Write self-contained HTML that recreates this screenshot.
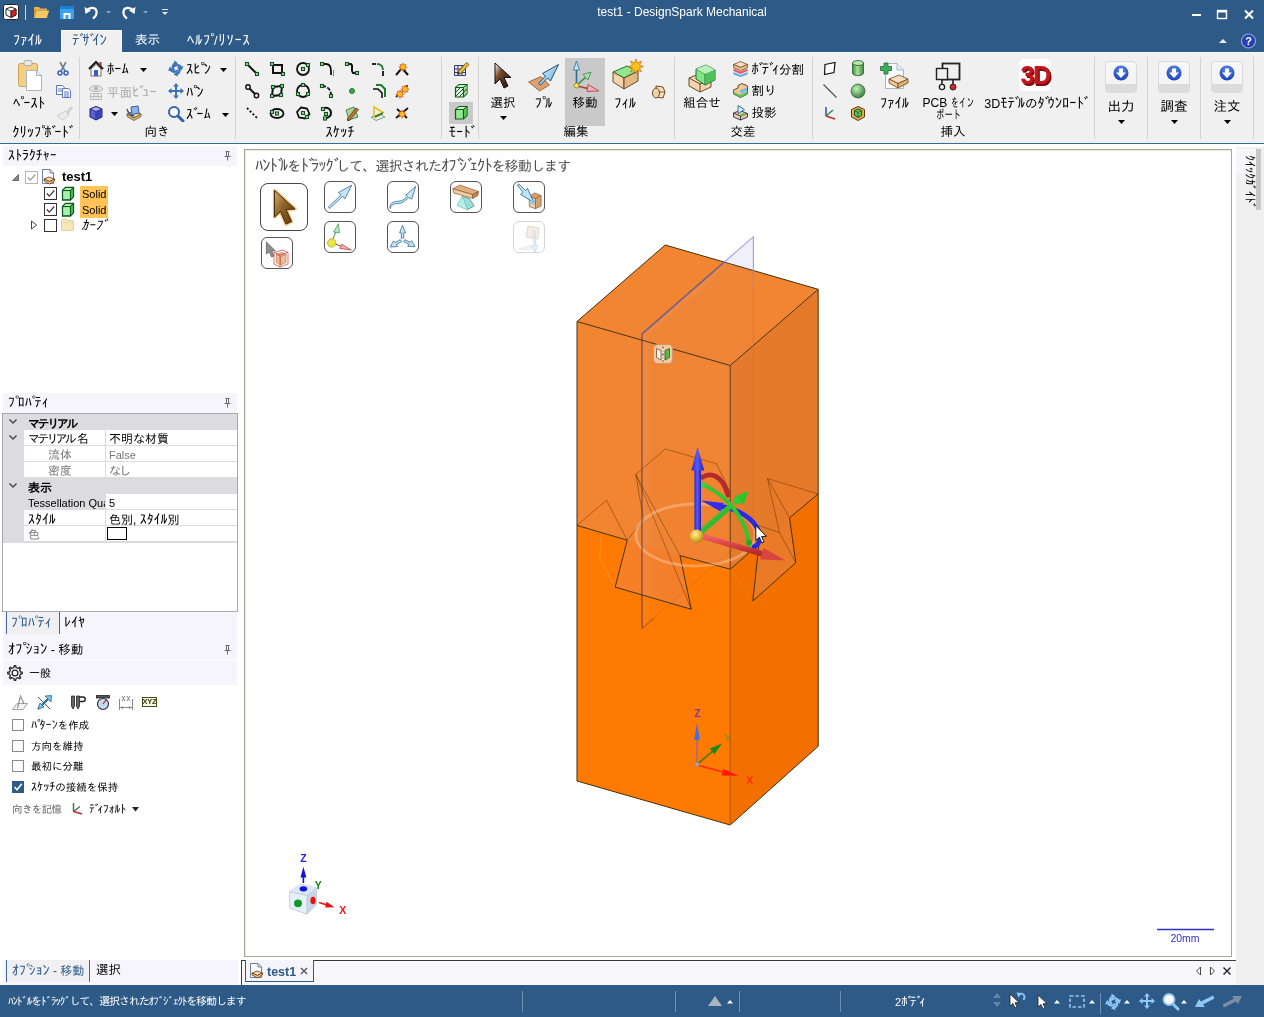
<!DOCTYPE html>
<html lang="ja">
<head>
<meta charset="utf-8">
<title>test1 - DesignSpark Mechanical</title>
<style>
*{box-sizing:border-box;margin:0;padding:0}
html,body{width:1264px;height:1017px;overflow:hidden;background:#fff}
body{position:relative;font-family:"Liberation Sans","IPAGothic","Noto Sans CJK JP",sans-serif;font-size:12px;color:#000;line-height:1}
.a{position:absolute}
.t{position:absolute;white-space:nowrap}
#title{left:0;top:0;width:1264px;height:52px;background:#2d5a87}
#ribbon{left:0;top:52px;width:1264px;height:91px;background:#f0f0f0;border-top:1px solid #f9f9f9;border-bottom:1px solid #e6f0f8}
#ribline{left:0;top:143px;width:1264px;height:1px;background:#3c6a97}
#under{left:0;top:144px;width:1264px;height:841px;background:#fff}
.sep{position:absolute;top:57px;width:1px;height:82px;background:#d4d4d4}
.gl{position:absolute;top:125px;font-size:12px;white-space:nowrap;transform:translateX(-50%)}
#status{left:0;top:985px;width:1264px;height:32px;background:#2d5a87}
</style>
</head>
<body>
<div id="app" style="position:absolute;left:0;top:0;width:1264px;height:1017px;will-change:transform">
<div id="title" class="a"></div>
<div id="ribbon" class="a"></div>
<div id="ribline" class="a"></div>
<div id="under" class="a"></div>
<div id="status" class="a"></div>
<!--TITLE-->
<!-- ===== title bar ===== -->
<svg class="a" style="left:0;top:0" width="200" height="28" viewBox="0 0 200 28">
  <!-- app icon -->
  <rect x="3.5" y="4.5" width="15" height="15" rx="2" fill="#fff" stroke="#222" stroke-width="1"/>
  <path d="M6 9 L11 7 L16 9 L16 15 L11 17.5 L6 15Z" fill="#fff" stroke="#222" stroke-width="1"/>
  <path d="M11 11 L16 9 L16 15 L11 17.5Z" fill="#d8232a" stroke="#222" stroke-width=".8"/>
  <path d="M6 9 L11 11 L11 17.5" fill="none" stroke="#222" stroke-width=".8"/>
  <rect x="25" y="5" width="1" height="15" fill="#c9d3df"/>
  <!-- folder -->
  <path d="M34 7 h5 l1.5 1.5 h6.5 v2 h-13z" fill="#e8b04a"/>
  <path d="M34 18 l2.2-7.5 h13 l-2.4 7.5z" fill="#f6c667"/>
  <path d="M34 18 v-9 l2.2 1.5z" fill="#d99a32"/>
  <!-- save -->
  <rect x="60" y="6" width="14" height="13" fill="#3aa0f0"/>
  <rect x="60" y="6" width="14" height="3" fill="#1b7fd6"/>
  <rect x="63.500" y="13" width="7" height="6" fill="#fff"/>
  <rect x="65.500" y="15" width="3" height="4" fill="#3aa0f0"/>
  <!-- undo -->
  <path d="M87 10.500 c3-4 9-3.500 9.500 1 c.5 3-1.500 5.500-3.500 7" fill="none" stroke="#fff" stroke-width="2.200"/>
  <path d="M84.500 7 l1 7 l5.500-3.500z" fill="#fff"/>
  <path d="M106 11 h5 l-2.500 2.500z" fill="#8fa6be"/>
  <!-- redo -->
  <path d="M133 10.500 c-3-4-9-3.500-9.500 1 c-.5 3 1.500 5.500 3.500 7" fill="none" stroke="#fff" stroke-width="2.200"/>
  <path d="M135.500 7 l-1 7 l-5.500-3.500z" fill="#fff"/>
  <path d="M143 11 h5 l-2.500 2.500z" fill="#8fa6be"/>
  <!-- customize -->
  <rect x="162" y="9" width="6" height="1" fill="#dfe6ee"/>
  <path d="M162 12 h6 l-3 3z" fill="#dfe6ee"/>
</svg>
<div class="t" style="left:50px;width:1264px;top:6px;text-align:center;color:#fff;font-size:12px">test1 - DesignSpark Mechanical</div>
<svg class="a" style="left:1180px;top:0" width="84" height="53" viewBox="0 0 84 53">
  <rect x="12" y="14" width="9" height="2" fill="#fff"/>
  <rect x="37.500" y="10.500" width="9" height="8" fill="none" stroke="#fff" stroke-width="1.400"/>
  <rect x="37" y="10" width="10" height="2.500" fill="#fff"/>
  <path d="M65 10.500 l8 8 M73 10.500 l-8 8" stroke="#fff" stroke-width="2"/>
  <path d="M39 43 l4-4 l4 4z" fill="#e8eef5"/>
  <circle cx="68.500" cy="41" r="7" fill="#2440b4" stroke="#8fa4de" stroke-width="1.200"/>
  <text x="68.500" y="45.200" font-size="11" font-weight="bold" fill="#fff" text-anchor="middle" font-family="Liberation Sans, sans-serif">?</text>
</svg>
<!-- tabs -->
<div class="a" style="left:61px;top:30px;width:61px;height:23px;background:#f0f0f0;border:1px solid #fafafa;border-bottom:none"></div>
<div class="t" style="left:13px;top:32px;height:16px;line-height:16px;color:#fff;font-size:12.500px"><span style="font-size:1.16em">ﾌｧｲﾙ</span></div>
<div class="t" style="left:72px;top:32px;height:16px;line-height:16px;color:#2d5a87;font-size:12.500px"><span style="font-size:1.16em">ﾃ<span style="margin-right:-0.3em">ﾞ</span>ｻ<span style="margin-right:-0.3em">ﾞ</span>ｲﾝ</span></div>
<div class="t" style="left:135px;top:32px;height:16px;line-height:16px;color:#fff;font-size:12.500px">表示</div>
<div class="t" style="left:187px;top:32px;height:16px;line-height:16px;color:#fff;font-size:12.500px;letter-spacing:.8px"><span style="font-size:1.16em">ﾍﾙﾌ<span style="margin-right:-0.3em">ﾟ</span></span>/<span style="font-size:1.16em">ﾘｿｰｽ</span></div>

<!--TITLE_END-->
<!--RIBBON-->
<div class="sep" style="left:79px"></div>
<div class="sep" style="left:235px"></div>
<div class="sep" style="left:441px"></div>
<div class="sep" style="left:478px"></div>
<div class="sep" style="left:674px"></div>
<div class="sep" style="left:812px"></div>
<div class="sep" style="left:1094px"></div>
<div class="sep" style="left:1147px"></div>
<div class="sep" style="left:1200px"></div>
<div class="sep" style="left:1253px"></div>
<svg class="a" style="left:16px;top:58px" width="28" height="34" viewBox="0 0 28 34">
<rect x="2.500" y="5.500" width="19" height="23" rx="2" fill="#f3cf86" stroke="#c9a257"/>
<rect x="8" y="2.500" width="8" height="5" rx="1.500" fill="#e9e9e9" stroke="#aaa"/>
<path d="M10.500 12.500h10l5 5v15h-15z" fill="#fff" stroke="#a9b4c4"/>
<path d="M20.500 12.500v5h5" fill="#e4ebf5" stroke="#a9b4c4"/></svg>
<div class="t" style="left:-31px;width:120px;text-align:center;top:95px;height:16px;line-height:16px;font-size:12.5px;color:#000"><span style="font-size:1.16em">ﾍ<span style="margin-right:-0.3em">ﾟ</span>ｰｽﾄ</span></div>
<svg class="a" style="left:56px;top:61px" width="14" height="15" viewBox="0 0 14 15"><path d="M4 1 L9 10 M10 1 L5 10" stroke="#6c7f9c" stroke-width="1.600" fill="none"/>
<circle cx="4" cy="12" r="2" fill="none" stroke="#3a5fc0" stroke-width="1.500"/><circle cx="10" cy="12" r="2" fill="none" stroke="#3a5fc0" stroke-width="1.500"/></svg>
<svg class="a" style="left:55px;top:84px" width="18" height="14" viewBox="0 0 18 14"><path d="M1.500 1.500h6l2 2v7h-8z" fill="#fff" stroke="#5a78b8"/><path d="M3 5h4M3 7h4" stroke="#5a78b8"/>
<path d="M7.500 4.500h6l2 2v7h-8z" fill="#fff" stroke="#5a78b8"/><path d="M9 8h5M9 10h5M9 12h5" stroke="#5a78b8"/></svg>
<svg class="a" style="left:55px;top:105px" width="19" height="16" viewBox="0 0 19 16"><path d="M11 7 L16 1.500 L17.500 3 L13 9z" fill="#d6d6d6" stroke="#bdbdbd" stroke-width=".6"/>
<path d="M2 11 L10 6 L14 10 L7 15z" fill="#ececec" stroke="#c4c4c4" stroke-width=".8"/></svg>
<div class="t" style="left:-18px;width:120px;text-align:center;top:124px;height:16px;line-height:16px;font-size:12.5px;color:#000"><span style="font-size:1.16em">ｸﾘｯﾌ<span style="margin-right:-0.3em">ﾟ</span>ﾎ<span style="margin-right:-0.3em">ﾞ</span>ｰﾄ<span style="margin-right:-0.3em">ﾞ</span></span></div>
<svg class="a" style="left:88px;top:60px" width="16" height="17" viewBox="0 0 16 17"><path d="M1 9 L8 2 L15 9" fill="none" stroke="#1a1a1a" stroke-width="2"/>
<path d="M3 9 L8 4.500 L13 9 V16 H3z" fill="#fff" stroke="#444" stroke-width=".8"/>
<rect x="6" y="10" width="4" height="6" fill="#3e58c8"/><rect x="11.500" y="2" width="2" height="4" fill="#a03020"/></svg>
<div class="t" style="left:107px;top:61px;height:16px;line-height:16px;font-size:12.5px;color:#000;"><span style="font-size:1.16em">ﾎｰﾑ</span></div>
<svg class="a" style="left:140px;top:67.5px" width="7" height="4" viewBox="0 0 7 4"><path d="M0 0h7L3.500 4z" fill="#000"/></svg>
<svg class="a" style="left:88px;top:83px" width="16" height="17" viewBox="0 0 16 17"><path d="M1 6 C4 1.500 12 1.500 15 6 C12 9.500 4 9.500 1 6z" fill="#e6e6e6" stroke="#b4b4b4"/><circle cx="8" cy="5.500" r="2" fill="#b4b4b4"/>
<path d="M2.500 10.500h11v6h-11zM6 10.500v6M10 10.500v6M2.500 13.500h11" fill="none" stroke="#b9b9b9"/></svg>
<div class="t" style="left:107px;top:83.5px;height:16px;line-height:16px;font-size:12.5px;color:#a9a9a9;">平面<span style="font-size:1.16em">ﾋ<span style="margin-right:-0.3em">ﾞ</span>ｭｰ</span></div>
<svg class="a" style="left:89px;top:105px" width="14" height="16" viewBox="0 0 14 16"><path d="M1 4 L7 1.500 L13 4 V12 L7 15 L1 12z" fill="#5b63d6" stroke="#1d2168" stroke-width="1"/>
<path d="M1 4 L7 6.500 L13 4 L7 1.500z" fill="#aab0f2" stroke="#1d2168" stroke-width=".8"/><path d="M7 6.500V15" stroke="#1d2168" stroke-width=".8"/><path d="M7 6.500 L13 4 V12 L7 15z" fill="#3b42b4"/></svg>
<svg class="a" style="left:111px;top:112.0px" width="7" height="4" viewBox="0 0 7 4"><path d="M0 0h7L3.500 4z" fill="#000"/></svg>
<svg class="a" style="left:125px;top:105px" width="18" height="16" viewBox="0 0 18 16"><path d="M2 9 L9 6 L16 9 L9 13z" fill="#f2d3a8" stroke="#6b4a22" stroke-width=".8"/><path d="M2 9v2.500l7 4 7-4V9l-7 4z" fill="#e0b983" stroke="#6b4a22" stroke-width=".8"/>
<path d="M6 2 L13 1 L14 8 L7 9.500z" fill="#8fb4ea" stroke="#2b4f9a" stroke-width=".9"/><path d="M2 4 C3 8 5 10 9 11" fill="none" stroke="#2b4f9a" stroke-width="1.300"/></svg>
<svg class="a" style="left:167px;top:60px" width="18" height="17" viewBox="0 0 18 17"><g fill="none" stroke="#3c72b4" stroke-width="2.100" stroke-linecap="round"><path d="M8.500 3 C5 4.500 5 8 7 10"/><path d="M14 7.500 C12.500 4.500 9.500 4.500 7 6.500" /><path d="M9.500 14 C13 13 13.500 9.500 11.500 7.500"/><path d="M3.500 9.500 C5 12.500 8 12.500 10.500 10.500"/></g>
<path d="M7 0.500 L11 3 L7.500 5.500z M16.500 6 L14.500 10.500 L11.500 7z M11 16.500 L6.500 14.500 L10 11.500z M1 11 L3 6.500 L6 10z" fill="#3c72b4"/></svg>
<div class="t" style="left:186px;top:61px;height:16px;line-height:16px;font-size:12.5px;color:#000;"><span style="font-size:1.16em">ｽﾋ<span style="margin-right:-0.3em">ﾟ</span>ﾝ</span></div>
<svg class="a" style="left:219.5px;top:67.5px" width="7" height="4" viewBox="0 0 7 4"><path d="M0 0h7L3.500 4z" fill="#000"/></svg>
<svg class="a" style="left:167px;top:82px" width="18" height="18" viewBox="0 0 18 18"><path d="M9 1 L12 4.500 H10 V8 H13.500 V6 L17 9 L13.500 12 V10 H10 V13.500 H12 L9 17 L6 13.500 H8 V10 H4.500 V12 L1 9 L4.500 6 V8 H8 V4.500 H6z" fill="#3c72b4"/></svg>
<div class="t" style="left:186px;top:83.5px;height:16px;line-height:16px;font-size:12.5px;color:#000;"><span style="font-size:1.16em">ﾊ<span style="margin-right:-0.3em">ﾟ</span>ﾝ</span></div>
<svg class="a" style="left:167px;top:105px" width="18" height="17" viewBox="0 0 18 17"><circle cx="7" cy="7" r="5" fill="#fff" stroke="#2f63a8" stroke-width="2"/><path d="M11 11 L16 16" stroke="#2f63a8" stroke-width="3" stroke-linecap="round"/></svg>
<div class="t" style="left:186px;top:106px;height:16px;line-height:16px;font-size:12.5px;color:#000;"><span style="font-size:1.16em">ｽ<span style="margin-right:-0.3em">ﾞ</span>ｰﾑ</span></div>
<svg class="a" style="left:222px;top:112.5px" width="7" height="4" viewBox="0 0 7 4"><path d="M0 0h7L3.500 4z" fill="#000"/></svg>
<div class="t" style="left:97px;width:120px;text-align:center;top:124px;height:16px;line-height:16px;font-size:12.5px;color:#000">向き</div>
<svg class="a" style="left:244px;top:61px" width="16" height="16" viewBox="0 0 16 16"><path d="M3 3 L13 13" stroke="#111" stroke-width="2"/><rect x="1.5" y="1.5" width="3" height="3" fill="#9fd8a0" stroke="#14501e" stroke-width="1.100"/><rect x="11.5" y="11.5" width="3" height="3" fill="#9fd8a0" stroke="#14501e" stroke-width="1.100"/></svg>
<svg class="a" style="left:269px;top:61px" width="16" height="16" viewBox="0 0 16 16"><rect x="4" y="4" width="9" height="8" fill="none" stroke="#111" stroke-width="2"/><rect x="1.5" y="1.5" width="3" height="3" fill="#9fd8a0" stroke="#14501e" stroke-width="1.100"/><rect x="12.5" y="11.5" width="3" height="3" fill="#9fd8a0" stroke="#14501e" stroke-width="1.100"/></svg>
<svg class="a" style="left:294.5px;top:61px" width="16" height="16" viewBox="0 0 16 16"><circle cx="8" cy="8" r="6" fill="none" stroke="#111" stroke-width="1.800"/><rect x="6.5" y="6.5" width="3" height="3" fill="#9fd8a0" stroke="#14501e" stroke-width="1.100"/><rect x="11.5" y="2.5" width="3" height="3" fill="#9fd8a0" stroke="#14501e" stroke-width="1.100"/></svg>
<svg class="a" style="left:319px;top:61px" width="16" height="16" viewBox="0 0 16 16"><path d="M3 3 H7 C11 3 12 6 12 10 V14" fill="none" stroke="#111" stroke-width="1.800"/><path d="M14.500 9v6" stroke="#888"/><rect x="1.5" y="1.5" width="3" height="3" fill="#9fd8a0" stroke="#14501e" stroke-width="1.100"/></svg>
<svg class="a" style="left:344px;top:61px" width="16" height="16" viewBox="0 0 16 16"><path d="M3 3 H7 C10 5 6 9 9 12 H13" fill="none" stroke="#111" stroke-width="2"/><rect x="1.5" y="1.5" width="3" height="3" fill="#9fd8a0" stroke="#14501e" stroke-width="1.100"/><rect x="11.5" y="10.5" width="3" height="3" fill="#9fd8a0" stroke="#14501e" stroke-width="1.100"/></svg>
<svg class="a" style="left:370px;top:61px" width="16" height="16" viewBox="0 0 16 16"><path d="M2 3 H6" stroke="#111" stroke-width="1.800"/><path d="M7 3 C11 3 13 6 13 9" fill="none" stroke="#1f7a2e" stroke-width="2"/><path d="M13 10 V15" stroke="#111" stroke-width="1.800"/></svg>
<svg class="a" style="left:394px;top:61px" width="16" height="16" viewBox="0 0 16 16"><path d="M2 14 L8 7 L14 14" fill="none" stroke="#111" stroke-width="2"/><path d="M9 1 l1.200 2.800 2.800-1.200-1.200 2.800 2.800 1.200-2.800 1.200 1.200 2.800-2.800-1.200-1.200 2.800-1.200-2.800-2.800 1.200 1.200-2.800-2.800-1.200 2.800-1.200-1.200-2.800 2.800 1.200z" fill="#f4c21a" stroke="#d6301a" stroke-width=".7" transform="scale(.75) translate(3.0 1.6666666666666667)"/></svg>
<svg class="a" style="left:244px;top:83px" width="16" height="16" viewBox="0 0 16 16"><path d="M4 4 L12 12" stroke="#111" stroke-width="2"/><circle cx="4" cy="4" r="2.200" fill="#f0f0f0" stroke="#111" stroke-width="1.400"/><circle cx="12.500" cy="12.500" r="2.200" fill="#f0f0f0" stroke="#111" stroke-width="1.400"/></svg>
<svg class="a" style="left:269px;top:83px" width="16" height="16" viewBox="0 0 16 16"><path d="M4 4 L13 3 L12 12 L3 13z" fill="none" stroke="#111" stroke-width="2"/><rect x="2.5" y="2.5" width="3" height="3" fill="#9fd8a0" stroke="#14501e" stroke-width="1.100"/><rect x="11.5" y="1.5" width="3" height="3" fill="#9fd8a0" stroke="#14501e" stroke-width="1.100"/><rect x="10.5" y="10.5" width="3" height="3" fill="#9fd8a0" stroke="#14501e" stroke-width="1.100"/><rect x="1.5" y="11.5" width="3" height="3" fill="#9fd8a0" stroke="#14501e" stroke-width="1.100"/></svg>
<svg class="a" style="left:294.5px;top:83px" width="16" height="16" viewBox="0 0 16 16"><circle cx="8" cy="8" r="6" fill="none" stroke="#111" stroke-width="1.800"/><rect x="6.5" y="0.5" width="3" height="3" fill="#9fd8a0" stroke="#14501e" stroke-width="1.100"/><rect x="1.5" y="9.5" width="3" height="3" fill="#9fd8a0" stroke="#14501e" stroke-width="1.100"/><rect x="11.5" y="9.5" width="3" height="3" fill="#9fd8a0" stroke="#14501e" stroke-width="1.100"/></svg>
<svg class="a" style="left:319px;top:83px" width="16" height="16" viewBox="0 0 16 16"><path d="M3 3 C8 3 12 6 12 12" fill="none" stroke="#111" stroke-width="1.800" stroke-dasharray="4 1.500"/><rect x="1.5" y="1.5" width="3" height="3" fill="#9fd8a0" stroke="#14501e" stroke-width="1.100"/><rect x="10.5" y="11.5" width="3" height="3" fill="#9fd8a0" stroke="#14501e" stroke-width="1.100"/></svg>
<svg class="a" style="left:344px;top:83px" width="16" height="16" viewBox="0 0 16 16"><circle cx="8" cy="8" r="2.500" fill="#3aa64a" stroke="#1f7a2e"/></svg>
<svg class="a" style="left:370px;top:83px" width="16" height="16" viewBox="0 0 16 16"><path d="M3 6 H8 L12 10 V15" fill="none" stroke="#111" stroke-width="1.600"/><path d="M6 2 H11 L15 6 V14" fill="none" stroke="#1f7a2e" stroke-width="2"/></svg>
<svg class="a" style="left:394px;top:83px" width="16" height="16" viewBox="0 0 16 16"><path d="M2 14 L14 2" stroke="#111" stroke-width="1.500" stroke-dasharray="3 1.500"/><path d="M6 6 l1.200 2.800 2.800-1.200-1.200 2.800 2.800 1.200-2.800 1.200 1.200 2.800-2.800-1.200-1.200 2.800-1.200-2.800-2.800 1.200 1.200-2.800-2.800-1.200 2.800-1.200-1.200-2.800 2.800 1.200z" fill="#f4c21a" stroke="#d6301a" stroke-width=".7" transform="scale(.75) translate(2.0 3.3333333333333335)"/><path d="M11 1 l1.200 2.800 2.800-1.200-1.200 2.800 2.800 1.200-2.800 1.200 1.200 2.800-2.800-1.200-1.200 2.800-1.200-2.800-2.800 1.200 1.200-2.800-2.800-1.200 2.800-1.200-1.200-2.800 2.800 1.200z" fill="#f4c21a" stroke="#d6301a" stroke-width=".7" transform="scale(.75) translate(3.6666666666666665 1.6666666666666667)"/></svg>
<svg class="a" style="left:244px;top:105px" width="16" height="16" viewBox="0 0 16 16"><path d="M3 3 L13 13" stroke="#111" stroke-width="1.800" stroke-dasharray="2 2"/></svg>
<svg class="a" style="left:269px;top:105px" width="16" height="16" viewBox="0 0 16 16"><ellipse cx="8" cy="8.500" rx="6.500" ry="4.500" fill="none" stroke="#111" stroke-width="1.800"/><rect x="6.5" y="7.0" width="3" height="3" fill="#9fd8a0" stroke="#14501e" stroke-width="1.100"/><rect x="1.5" y="5.5" width="3" height="3" fill="#9fd8a0" stroke="#14501e" stroke-width="1.100"/></svg>
<svg class="a" style="left:294.5px;top:105px" width="16" height="16" viewBox="0 0 16 16"><path d="M6 2.500 L12 3.500 L14.500 9 L10 13.500 L4 12.500 L2 7z" fill="none" stroke="#111" stroke-width="1.800"/><rect x="6.5" y="6.5" width="3" height="3" fill="#9fd8a0" stroke="#14501e" stroke-width="1.100"/><rect x="10.5" y="10.5" width="3" height="3" fill="#9fd8a0" stroke="#14501e" stroke-width="1.100"/></svg>
<svg class="a" style="left:319px;top:105px" width="16" height="16" viewBox="0 0 16 16"><path d="M5 3 C12 1 15 10 8 13" fill="none" stroke="#111" stroke-width="2"/><rect x="2.5" y="2.5" width="3" height="3" fill="#9fd8a0" stroke="#14501e" stroke-width="1.100"/><rect x="5.5" y="7.5" width="3" height="3" fill="#9fd8a0" stroke="#14501e" stroke-width="1.100"/><rect x="4.5" y="12.0" width="3" height="3" fill="#9fd8a0" stroke="#14501e" stroke-width="1.100"/></svg>
<svg class="a" style="left:344px;top:105px" width="16" height="16" viewBox="0 0 16 16"><path d="M2 5 L10 2 L14 12 L5 15z" fill="#a6d49a" stroke="#3f6a3a" stroke-width=".8"/><path d="M3 14 L12 3 L14.500 4.500 L5.500 15.500z" fill="#b8742e" stroke="#5a2f0c" stroke-width=".7"/><path d="M3 14 l.5 2.200 2-.700z" fill="#222"/></svg>
<svg class="a" style="left:370px;top:105px" width="16" height="16" viewBox="0 0 16 16"><path d="M1 12 L10 9 L15 12 L6 15.500z" fill="#e8f3e2" stroke="#6b8a5e" stroke-width=".8"/><path d="M4 2 L13 7.500 L4 12z" fill="none" stroke="#e0c020" stroke-width="1.600"/><path d="M5 12 L13 8" stroke="#1f7a2e" stroke-width="1.600"/></svg>
<svg class="a" style="left:394px;top:105px" width="16" height="16" viewBox="0 0 16 16"><path d="M2 13 L14 3 M3 4 L13 13" stroke="#111" stroke-width="1.700"/><path d="M8 4 l1.200 2.800 2.800-1.200-1.200 2.800 2.800 1.200-2.800 1.200 1.200 2.800-2.800-1.200-1.200 2.800-1.200-2.800-2.800 1.200 1.200-2.800-2.800-1.200 2.800-1.200-1.200-2.800 2.800 1.200z" fill="#f4c21a" stroke="#d6301a" stroke-width=".7" transform="scale(.75) translate(2.6666666666666665 2.6666666666666665)"/></svg>
<div class="t" style="left:280px;width:120px;text-align:center;top:124px;height:16px;line-height:16px;font-size:12.5px;color:#000"><span style="font-size:1.16em">ｽｹｯﾁ</span></div>
<div class="a" style="left:449px;top:102px;width:24px;height:22px;background:#c9c9c9"></div>
<svg class="a" style="left:453px;top:61px" width="17" height="16" viewBox="0 0 17 16"><path d="M1.500 4.500h11v10h-11zM1.500 8h11M1.500 11.500h11M5 4.500v10M9 4.500v10" fill="#e8e8f4" stroke="#2a2a66" stroke-width=".9"/><path d="M5 11 L13.500 1.500 L16 3.500 L7.500 13z" fill="#e8c030" stroke="#5a3a0c" stroke-width=".7"/><path d="M5 11 l-.6 2.600 3.100-.6z" fill="#222"/></svg>
<svg class="a" style="left:454px;top:83px" width="15" height="16" viewBox="0 0 15 16"><path d="M1.500 4.500 L5 1.500 H13 V10.500 L9.500 14 H1.500z" fill="#dff5df" stroke="#0e5a1a" stroke-width="1.200"/><path d="M1.500 4.500 H9.500 L13 1.500 M9.500 4.500 V14" fill="none" stroke="#0e5a1a" stroke-width="1.200"/><path d="M10 4.700 L12.500 2.500 V10.200 L10 13z" fill="#9fd89f"/><path d="M2.500 4 L5.200 2 H11.700 L9.300 4z" fill="#c6f0c6"/><path d="M2 9 L6 5 M2 13 L9 6 M5 14 L9 10 M10 9 L12.500 6" stroke="#0e5a1a" stroke-width="1"/></svg>
<svg class="a" style="left:454px;top:105px" width="15" height="16" viewBox="0 0 15 16"><path d="M1.500 4.500 L5 1.500 H13 V10.500 L9.500 14 H1.500z" fill="#8ee88e" stroke="#0e5a1a" stroke-width="1.200"/><path d="M1.500 4.500 H9.500 L13 1.500 M9.500 4.500 V14" fill="none" stroke="#0e5a1a" stroke-width="1.200"/><path d="M10 4.700 L12.500 2.500 V10.200 L10 13z" fill="#58c458"/><path d="M2.500 4 L5.200 2 H11.700 L9.300 4z" fill="#c6f6c6"/></svg>
<div class="t" style="left:401px;width:120px;text-align:center;top:124px;height:16px;line-height:16px;font-size:12.5px;color:#000"><span style="font-size:1.16em">ﾓｰﾄ<span style="margin-right:-0.3em">ﾞ</span></span></div>
<svg class="a" style="left:490px;top:60px" width="26" height="32" viewBox="0 0 26 32"><defs><linearGradient id="gsel" x1="0" y1="0" x2="1" y2="1"><stop offset="0" stop-color="#fff"/><stop offset=".35" stop-color="#7a4a2a"/><stop offset="1" stop-color="#1a0c04"/></linearGradient></defs>
<path d="M5 3 L5 24 L10 19 L14 28 L18 26 L14 17.500 L21 17.500z" fill="url(#gsel)" stroke="#111" stroke-width="1"/></svg>
<div class="t" style="left:443px;width:120px;text-align:center;top:95px;height:16px;line-height:16px;font-size:12.5px;color:#000">選択</div>
<svg class="a" style="left:500px;top:116.0px" width="7" height="4" viewBox="0 0 7 4"><path d="M0 0h7L3.500 4z" fill="#000"/></svg>
<svg class="a" style="left:528px;top:60px" width="32" height="32" viewBox="0 0 32 32"><defs><linearGradient id="gpl" x1="0" y1="0" x2="1" y2="1"><stop offset="0" stop-color="#e8f6fc"/><stop offset="1" stop-color="#58a8d8"/></linearGradient></defs>
<path d="M.5 22 L13 16.500 L21.500 25 L11.500 31z" fill="#dca070" stroke="#8a5a2e" stroke-width=".8"/>
<path d="M10.500 23.500 L17.500 16 L14.500 13.500 L30.500 4.500 L22.500 21 L19.500 18 L12.500 25z" fill="url(#gpl)" stroke="#1e4f76" stroke-width="1" stroke-linejoin="round"/></svg>
<div class="t" style="left:483.5px;width:120px;text-align:center;top:95px;height:16px;line-height:16px;font-size:12.5px;color:#000"><span style="font-size:1.16em">ﾌ<span style="margin-right:-0.3em">ﾟ</span>ﾙ</span></div>
<div class="a" style="left:565px;top:58px;width:40px;height:68px;background:#c9c9c9"></div>
<svg class="a" style="left:570px;top:60px" width="30" height="32" viewBox="0 0 30 32"><path d="M5 6 L8 6 L6.500 1z" fill="#9fd0ee"/><path d="M6.500 25 V8" stroke="#2e6f96" stroke-width="1.600"/><path d="M3.500 10 L6.500 1 L9.500 10z" fill="#bfe4f6" stroke="#2e6f96" stroke-width=".8"/>
<path d="M7 25 L16 17" stroke="#3a8a4a" stroke-width="1.600"/><path d="M13 14.500 L21 12 L18 20z" fill="#a6e0b0" stroke="#3a8a4a" stroke-width=".8"/>
<path d="M7 26 L20 29" stroke="#b03a3a" stroke-width="1.600"/><path d="M18 24.500 L29 31 L17 31.500z" fill="#f2b0b0" stroke="#b03a3a" stroke-width=".8"/>
<circle cx="6.500" cy="25.500" r="2.500" fill="#f2e25a" stroke="#8a7a1a" stroke-width=".8"/></svg>
<div class="t" style="left:525px;width:120px;text-align:center;top:95px;height:16px;line-height:16px;font-size:12.5px;color:#000">移動</div>
<svg class="a" style="left:610px;top:58px" width="34" height="34" viewBox="0 0 34 34"><path d="M3 14 L17 8 L28 13 L14 20z" fill="#8ee88e" stroke="#1f5a2a" stroke-width=".9"/>
<path d="M3 14 V24 L14 31 V20z" fill="#f4d4ac" stroke="#5a3a1a" stroke-width=".9"/><path d="M14 20 L28 13 V23 L14 31z" fill="#e2b884" stroke="#5a3a1a" stroke-width=".9"/>
<path d="M26 1 l1.500 4 4-2-2 4 4 1.500-4 1.500 2 4-4-2-1.500 4-1.500-4-4 2 2-4-4-1.500 4-1.500-2-4 4 2z" fill="#f6c21a" stroke="#e0701a" stroke-width=".8"/></svg>
<div class="t" style="left:565px;width:120px;text-align:center;top:95px;height:16px;line-height:16px;font-size:12.5px;color:#000"><span style="font-size:1.16em">ﾌｨﾙ</span></div>
<svg class="a" style="left:651px;top:84px" width="16" height="17" viewBox="0 0 16 17"><path d="M5 2 L12 3 L14 8 L12 14 L5 13z" fill="#f6dcc0" stroke="#6b4a22" stroke-width="1"/><ellipse cx="5" cy="9" rx="3.500" ry="5" fill="#f2cfa6" stroke="#6b4a22" stroke-width="1"/><path d="M8 8 L14 8" stroke="#6b4a22" stroke-width=".8"/></svg>
<div class="t" style="left:516px;width:120px;text-align:center;top:124px;height:16px;line-height:16px;font-size:12.5px;color:#000">編集</div>
<svg class="a" style="left:687px;top:61px" width="30" height="32" viewBox="0 0 30 32"><path d="M2 17 L12 13 L24 19 V26 L13 31 L2 25z" fill="#f4d4ac" stroke="#5a3a1a" stroke-width=".9"/><path d="M2 17 L13 23 L24 19 M13 23 V31" fill="none" stroke="#5a3a1a" stroke-width=".9"/>
<path d="M9 8 L19 4 L28 9 V19 L18 24 L9 18z" fill="#7fe68a" stroke="#1f5a2a" stroke-width=".9"/><path d="M9 8 L18 13 L28 9 M18 13 V24" fill="none" stroke="#1f5a2a" stroke-width=".9"/><path d="M9 8 L19 4 L28 9 L18 13z" fill="#b4f4ba"/><path d="M18.500 13.500 L27.500 9.700 V18.700 L18.500 23.300z" fill="#4cc45a"/></svg>
<div class="t" style="left:642px;width:120px;text-align:center;top:95px;height:16px;line-height:16px;font-size:12.5px;color:#000">組合せ</div>
<svg class="a" style="left:732px;top:60px" width="17" height="17" viewBox="0 0 17 17"><path d="M1.500 4.500 L8.500 1.500 L15.500 4.500 L8.500 7.500z" fill="#f6dcc0" stroke="#6b4a22" stroke-width=".8"/><path d="M1.500 4.500v3l7 3 7-3v-3l-7 3z" fill="#f0c896" stroke="#6b4a22" stroke-width=".8"/>
<path d="M1.500 8.500v2.500l7 3 7-3V8.500l-7 3z" fill="#e85a6a"/><path d="M1.500 12v2.500l7 2.500 7-2.500V12l-7 3z" fill="#6aa8e8"/></svg>
<div class="t" style="left:751.5px;top:61px;height:16px;line-height:16px;font-size:12.5px;color:#000;"><span style="font-size:1.16em">ﾎ<span style="margin-right:-0.3em">ﾞ</span>ﾃ<span style="margin-right:-0.3em">ﾞ</span>ｨ</span>分割</div>
<svg class="a" style="left:732px;top:82px" width="17" height="17" viewBox="0 0 17 17"><path d="M1.500 8 L6 6 V3.500 L10 1.500 L15.500 4 V12 L8.500 15.500 L1.500 12z" fill="#f0c896" stroke="#5a3a1a" stroke-width=".9"/><path d="M1.500 10 L8.500 13 L15.500 9.500 V12 L8.500 15.500 L1.500 12z" fill="#58c458"/><path d="M8 8.500 L15 5.500 V9 L8.500 12z" fill="#7ab8f0"/></svg>
<div class="t" style="left:751.5px;top:83px;height:16px;line-height:16px;font-size:12.5px;color:#000;">割り</div>
<svg class="a" style="left:732px;top:104px" width="17" height="17" viewBox="0 0 17 17"><path d="M1.500 9 L8 6.500 L15.500 9.500 V13 L8.500 16 L1.500 13z" fill="#f0c896" stroke="#2a2a66" stroke-width=".9"/><path d="M1.500 9 L8.500 12 L15.500 9.500 M8.500 12V16" fill="none" stroke="#2a2a66" stroke-width=".9"/>
<path d="M6 1.500 L12.500 5.500 L6 9.500z" fill="#d8ecfa" stroke="#2e6f96" stroke-width="1"/><path d="M8 10.500 L12 9 L14 11 L10 12.500z" fill="#58c458"/></svg>
<div class="t" style="left:751.5px;top:105px;height:16px;line-height:16px;font-size:12.5px;color:#000;">投影</div>
<div class="t" style="left:683px;width:120px;text-align:center;top:124px;height:16px;line-height:16px;font-size:12.5px;color:#000">交差</div>
<svg class="a" style="left:822px;top:60px" width="16" height="16" viewBox="0 0 16 16"><path d="M3 4.500 L13 2.500 L12 12.500 L2.500 14.500z" fill="#fff" stroke="#111" stroke-width="1.200"/></svg>
<svg class="a" style="left:822px;top:83px" width="16" height="16" viewBox="0 0 16 16"><path d="M1.500 1.500 L14.500 14.500" stroke="#555" stroke-width="1.200"/></svg>
<svg class="a" style="left:822px;top:105px" width="16" height="16" viewBox="0 0 16 16"><path d="M4 2 V11" stroke="#2a5fb8" stroke-width="1.600"/><path d="M4 11 L11 5" stroke="#2a8a3a" stroke-width="1.400"/><path d="M4 11 L13 14" stroke="#c02a2a" stroke-width="1.600"/></svg>
<svg class="a" style="left:850px;top:59px" width="16" height="18" viewBox="0 0 16 18"><defs><linearGradient id="gcy" x1="0" x2="1"><stop offset="0" stop-color="#3f8a3f"/><stop offset=".45" stop-color="#a6e0a0"/><stop offset="1" stop-color="#3f8a3f"/></linearGradient><radialGradient id="gsp" cx=".4" cy=".35" r=".7"><stop offset="0" stop-color="#c6f0c0"/><stop offset="1" stop-color="#2f7a2f"/></radialGradient></defs>
<path d="M2.500 4 V14 C2.500 17.500 13.500 17.500 13.500 14 V4z" fill="url(#gcy)" stroke="#2a5a2a" stroke-width=".8"/><ellipse cx="8" cy="4" rx="5.500" ry="2.500" fill="#b4e8b0" stroke="#2a5a2a" stroke-width=".8"/></svg>
<svg class="a" style="left:850px;top:83px" width="16" height="16" viewBox="0 0 16 16"><circle cx="8" cy="8" r="7" fill="url(#gsp)" stroke="#2a5a2a" stroke-width=".7"/></svg>
<svg class="a" style="left:850px;top:105px" width="16" height="17" viewBox="0 0 16 17"><path d="M1.500 4.500 L8 1.500 L14.500 4.500 V12 L8 15.500 L1.500 12z" fill="#e8a850" stroke="#5a3a0c" stroke-width="1"/><path d="M4.500 5.500 L8 4 L11.500 5.500 V10.500 L8 12.500 L4.500 10.500z" fill="#58c458" stroke="#1f5a2a" stroke-width="1"/><path d="M8 7.500V12.500M4.500 5.500L8 7.500L11.500 5.500" fill="none" stroke="#1f5a2a" stroke-width=".8"/></svg>
<svg class="a" style="left:880px;top:60px" width="30" height="32" viewBox="0 0 30 32"><path d="M5.500 3.500 H17 L23.500 10 V28.500 H5.500z" fill="#fbfcfe" stroke="#a9b4c8"/><path d="M17 3.500 V10 H23.500" fill="#e4eaf4" stroke="#a9b4c8"/>
<path d="M4 3 H8 V6.500 H11.500 V10.500 H8 V14 H4 V10.500 H.5 V6.500 H4z" fill="#3fae5a" stroke="#1f6a32" stroke-width=".8"/>
<path d="M9 19 L19 15 L28 19 L18 23.500z" fill="#f6dcc0" stroke="#6b4a22" stroke-width=".8"/><path d="M9 19 V23 L18 28 V23.500z" fill="#f0c896" stroke="#6b4a22" stroke-width=".8"/><path d="M18 23.500 L28 19 V23 L18 28z" fill="#e0b070" stroke="#6b4a22" stroke-width=".8"/></svg>
<div class="t" style="left:834.5px;width:120px;text-align:center;top:95px;height:16px;line-height:16px;font-size:12.5px;color:#000"><span style="font-size:1.16em">ﾌｧｲﾙ</span></div>
<svg class="a" style="left:934px;top:60px" width="28" height="32" viewBox="0 0 28 32"><rect x="8.500" y="3.500" width="17" height="16" fill="none" stroke="#222" stroke-width="1.800"/><rect x="2.500" y="8.500" width="11" height="11" fill="#f0f0f0" stroke="#222" stroke-width="1.400"/>
<path d="M8 19.500 V25 M19 19.500 V25" stroke="#222" stroke-width="1.600"/><circle cx="8" cy="27" r="2.600" fill="#fff" stroke="#222" stroke-width="1.400"/><circle cx="19" cy="27" r="3" fill="#d8232a" stroke="#222" stroke-width="1"/></svg>
<div class="t" style="left:888px;width:120px;text-align:center;top:95px;height:16px;line-height:16px;font-size:12.5px;color:#000"><span style="font-size:12px">PCB </span><span style="display:inline-block;width:23px;height:12px;vertical-align:baseline;text-align:left"><span style="display:inline-block;transform:scaleX(0.62);transform-origin:0 50%;white-space:nowrap">をイン</span></span></div>
<div class="t" style="left:888px;width:120px;text-align:center;top:107px;height:16px;line-height:16px;font-size:12.5px;color:#000"><span style="display:inline-block;width:25px;height:12px;vertical-align:baseline;text-align:left"><span style="display:inline-block;transform:scaleX(0.67);transform-origin:0 50%;white-space:nowrap">ポート</span></span></div>
<div class="a" style="left:1019px;top:59px;width:32px;height:32px;background:#fff;border-radius:5px"></div>
<div class="t" style="left:1019px;top:61px;width:32px;height:28px;line-height:28px;text-align:center;font-size:25px;font-weight:bold;color:#c8181e;letter-spacing:-1.500px;text-shadow:1px 1px 0 #7a0c10,1.500px 2px 0 #7a0c10">3D</div>
<div class="t" style="left:975.5px;width:120px;text-align:center;top:95px;height:16px;line-height:16px;font-size:12.5px;color:#000">3D<span style="font-size:1.16em">ﾓﾃ<span style="margin-right:-0.3em">ﾞ</span>ﾙ</span>の<span style="font-size:1.16em">ﾀ<span style="margin-right:-0.3em">ﾞ</span>ｳﾝﾛｰﾄ<span style="margin-right:-0.3em">ﾞ</span></span></div>
<div class="t" style="left:893px;width:120px;text-align:center;top:124px;height:16px;line-height:16px;font-size:12.5px;color:#000">挿入</div>
<div class="a" style="left:1105px;top:61px;width:32px;height:32px;border:1px solid #dadada;border-radius:4px;background:linear-gradient(#f7f7f7 0,#f4f4f4 72%,#dcdcdc 73%,#dcdcdc 100%)"></div>
<svg class="a" style="left:1113px;top:65px" width="16" height="16" viewBox="0 0 16 16"><defs><radialGradient id="gb1121" cx=".5" cy=".3" r=".8"><stop offset="0" stop-color="#5a8af0"/><stop offset="1" stop-color="#1436b4"/></radialGradient></defs><circle cx="8" cy="8" r="7.500" fill="url(#gb1121)"/><path d="M6 3.500h4v4h3L8 13 3 7.500h3z" fill="#fff"/></svg>
<div class="t" style="left:1061px;width:120px;text-align:center;top:99px;height:16px;line-height:16px;font-size:13.5px;color:#000">出力</div>
<svg class="a" style="left:1118px;top:120.0px" width="7" height="4" viewBox="0 0 7 4"><path d="M0 0h7L3.500 4z" fill="#000"/></svg>
<div class="a" style="left:1158px;top:61px;width:32px;height:32px;border:1px solid #dadada;border-radius:4px;background:linear-gradient(#f7f7f7 0,#f4f4f4 72%,#dcdcdc 73%,#dcdcdc 100%)"></div>
<svg class="a" style="left:1166px;top:65px" width="16" height="16" viewBox="0 0 16 16"><defs><radialGradient id="gb1174" cx=".5" cy=".3" r=".8"><stop offset="0" stop-color="#5a8af0"/><stop offset="1" stop-color="#1436b4"/></radialGradient></defs><circle cx="8" cy="8" r="7.500" fill="url(#gb1174)"/><path d="M6 3.500h4v4h3L8 13 3 7.500h3z" fill="#fff"/></svg>
<div class="t" style="left:1114px;width:120px;text-align:center;top:99px;height:16px;line-height:16px;font-size:13.5px;color:#000">調査</div>
<svg class="a" style="left:1171px;top:120.0px" width="7" height="4" viewBox="0 0 7 4"><path d="M0 0h7L3.500 4z" fill="#000"/></svg>
<div class="a" style="left:1211px;top:61px;width:32px;height:32px;border:1px solid #dadada;border-radius:4px;background:linear-gradient(#f7f7f7 0,#f4f4f4 72%,#dcdcdc 73%,#dcdcdc 100%)"></div>
<svg class="a" style="left:1219px;top:65px" width="16" height="16" viewBox="0 0 16 16"><defs><radialGradient id="gb1227" cx=".5" cy=".3" r=".8"><stop offset="0" stop-color="#5a8af0"/><stop offset="1" stop-color="#1436b4"/></radialGradient></defs><circle cx="8" cy="8" r="7.500" fill="url(#gb1227)"/><path d="M6 3.500h4v4h3L8 13 3 7.500h3z" fill="#fff"/></svg>
<div class="t" style="left:1167px;width:120px;text-align:center;top:99px;height:16px;line-height:16px;font-size:13.5px;color:#000">注文</div>
<svg class="a" style="left:1224px;top:120.0px" width="7" height="4" viewBox="0 0 7 4"><path d="M0 0h7L3.500 4z" fill="#000"/></svg>
<!--RIBBON_END-->
<!--LEFT-->
<div class="a" style="left:3px;top:147px;width:235px;height:812px;background:#fff;"></div>
<div class="a" style="left:3px;top:146px;width:234px;height:20px;background:#f5f5fb;"></div>
<div class="t" style="left:8px;top:147px;height:16px;line-height:16px;font-size:12px;color:#000;"><span style="font-size:1.16em">ｽﾄﾗｸﾁｬｰ</span></div>
<svg class="a" style="left:223px;top:150px" width="9" height="12" viewBox="0 0 9 12"><path d="M2.500 1.500h4M3.500 1.500v5M5.500 1.500v5M1.500 6.500h6M4.500 6.500v4" fill="none" stroke="#6a6a78" stroke-width="1"/></svg>
<svg class="a" style="left:11px;top:173px" width="9" height="9" viewBox="0 0 9 9"><path d="M7.500 1.500 V7.500 H1.500z" fill="#888" stroke="#555" stroke-width=".8"/></svg>
<svg class="a" style="left:25px;top:171px" width="13" height="13" viewBox="0 0 13 13"><rect x=".5" y=".5" width="12" height="12" fill="#fff" stroke="#b4b4b4"/><path d="M2.800 6.500 L5.300 9.200 L10.300 3.500" fill="none" stroke="#9a9a9a" stroke-width="1.200"/></svg>
<svg class="a" style="left:41px;top:169px" width="15" height="16" viewBox="0 0 15 16"><path d="M1.500 .5 H9 L12.500 4 V14.500 H1.500z" fill="#fff" stroke="#6f7f9c"/><path d="M9 .5V4h3.500" fill="none" stroke="#6f7f9c"/>
<path d="M3 10 L8 8 L13.500 10 L8.500 12.500z" fill="#f6dcc0" stroke="#6b3a12" stroke-width=".8"/><path d="M3 10v2l5.500 3 5-3v-2l-5 2.500z" fill="#f0c080" stroke="#6b3a12" stroke-width=".8"/></svg>
<div class="t" style="left:62px;top:169px;height:16px;line-height:16px;font-size:13px;color:#000;font-weight:bold">test1</div>
<svg class="a" style="left:44px;top:186.5px" width="13" height="13" viewBox="0 0 13 13"><rect x=".5" y=".5" width="12" height="12" fill="#fff" stroke="#333"/><path d="M2.800 6.500 L5.300 9.200 L10.300 3.500" fill="none" stroke="#333" stroke-width="1.200"/></svg>
<svg class="a" style="left:61px;top:185.5px" width="14" height="16" viewBox="0 0 14 16"><path d="M1.500 4.500 L4.500 1.500 H12.500 V10.500 L9.500 14 H1.500z" fill="#7fe68a" stroke="#0e5a1a" stroke-width="1.300"/><path d="M1.500 4.500 H9.500 L12.500 1.500 M9.500 4.500 V14" fill="none" stroke="#0e5a1a" stroke-width="1.200"/><path d="M10.200 4.800 L12 3 V10.200 L10.200 12.500z" fill="#3fb84f"/><path d="M2.800 3.800 L4.800 2.200 H11 L9.200 3.800z" fill="#c6f6c6"/><rect x="2.500" y="5.500" width="6" height="7.500" fill="#a6f0ac"/></svg>
<div class="a" style="left:80px;top:185.5px;width:28px;height:16px;background:#ffc356;"></div>
<div class="t" style="left:82px;top:185.5px;height:16px;line-height:16px;font-size:11px;color:#000;">Solid</div>
<svg class="a" style="left:44px;top:202.5px" width="13" height="13" viewBox="0 0 13 13"><rect x=".5" y=".5" width="12" height="12" fill="#fff" stroke="#333"/><path d="M2.800 6.500 L5.300 9.200 L10.300 3.500" fill="none" stroke="#333" stroke-width="1.200"/></svg>
<svg class="a" style="left:61px;top:201.5px" width="14" height="16" viewBox="0 0 14 16"><path d="M1.500 4.500 L4.500 1.500 H12.500 V10.500 L9.500 14 H1.500z" fill="#7fe68a" stroke="#0e5a1a" stroke-width="1.300"/><path d="M1.500 4.500 H9.500 L12.500 1.500 M9.500 4.500 V14" fill="none" stroke="#0e5a1a" stroke-width="1.200"/><path d="M10.200 4.800 L12 3 V10.200 L10.200 12.500z" fill="#3fb84f"/><path d="M2.800 3.800 L4.800 2.200 H11 L9.200 3.800z" fill="#c6f6c6"/><rect x="2.500" y="5.500" width="6" height="7.500" fill="#a6f0ac"/></svg>
<div class="a" style="left:80px;top:201.5px;width:28px;height:16px;background:#ffc356;"></div>
<div class="t" style="left:82px;top:201.5px;height:16px;line-height:16px;font-size:11px;color:#000;">Solid</div>
<svg class="a" style="left:30px;top:220px" width="8" height="10" viewBox="0 0 8 10"><path d="M1.500 1 L6.500 5 L1.500 9z" fill="#fff" stroke="#444" stroke-width="1"/></svg>
<svg class="a" style="left:44px;top:219px" width="13" height="13" viewBox="0 0 13 13"><rect x=".5" y=".5" width="12" height="12" fill="#fff" stroke="#333"/></svg>
<svg class="a" style="left:60px;top:217px" width="15" height="15" viewBox="0 0 15 15"><path d="M1.500 3.500 Q1.500 2 3 2 H6 L7.500 3.500 H12 Q13.500 3.500 13.500 5 V12 Q13.500 13.500 12 13.500 H3 Q1.500 13.500 1.500 12z" fill="#f6e8b8" stroke="#d8c890" stroke-width=".8"/><path d="M1.500 5.500 H13.500" stroke="#e8d8a0" stroke-width=".8"/></svg>
<div class="t" style="left:81px;top:217px;height:16px;line-height:16px;font-size:12px;color:#000;font-style:italic"><span style="font-size:1.16em">ｶｰﾌ<span style="margin-right:-0.3em">ﾞ</span></span></div>
<div class="a" style="left:3px;top:393px;width:234px;height:20px;background:#f5f5fb;"></div>
<div class="t" style="left:8px;top:394px;height:16px;line-height:16px;font-size:12px;color:#000;"><span style="font-size:1.16em">ﾌ<span style="margin-right:-0.3em">ﾟ</span>ﾛﾊ<span style="margin-right:-0.3em">ﾟ</span>ﾃｨ</span></div>
<svg class="a" style="left:223px;top:397px" width="9" height="12" viewBox="0 0 9 12"><path d="M2.500 1.500h4M3.500 1.500v5M5.500 1.500v5M1.500 6.500h6M4.500 6.500v4" fill="none" stroke="#6a6a78" stroke-width="1"/></svg>
<div class="a" style="left:2px;top:413px;width:236px;height:199px;background:#fff;border:1px solid #a8a8b0"></div>
<div class="a" style="left:3px;top:414px;width:234px;height:129px;background:#dcdce0;"></div>
<svg class="a" style="left:8px;top:417px" width="10" height="9" viewBox="0 0 10 9"><path d="M1.500 2.500 L5 6 L8.500 2.500" fill="none" stroke="#444" stroke-width="1.400"/></svg>
<div class="t" style="left:28px;top:415.5px;height:16px;line-height:16px;font-size:12px;color:#000;font-weight:bold"><span style="letter-spacing:-2.4px">マテリア</span>ル</div>
<div class="a" style="left:24px;top:430px;width:81px;height:15px;background:#fff;"></div>
<div class="a" style="left:106px;top:430px;width:131px;height:15px;background:#fff;"></div>
<div class="t" style="left:28px;top:431px;height:16px;line-height:16px;font-size:12px;color:#000;"><span style="letter-spacing:-2.8px">マテリア</span>ル名</div>
<div class="t" style="left:109px;top:431px;height:16px;line-height:16px;font-size:12px;color:#000;">不明な材質</div>
<svg class="a" style="left:8px;top:433px" width="10" height="9" viewBox="0 0 10 9"><path d="M1.500 2.500 L5 6 L8.500 2.500" fill="none" stroke="#444" stroke-width="1.400"/></svg>
<div class="a" style="left:24px;top:446px;width:81px;height:15px;background:#fff;"></div>
<div class="a" style="left:106px;top:446px;width:131px;height:15px;background:#fff;"></div>
<div class="t" style="left:48px;top:447px;height:16px;line-height:16px;font-size:12px;color:#777;">流体</div>
<div class="t" style="left:109px;top:447px;height:16px;line-height:16px;font-size:12px;color:#777;"><span style="font-size:11px">False</span></div>
<div class="a" style="left:24px;top:462px;width:81px;height:15px;background:#fff;"></div>
<div class="a" style="left:106px;top:462px;width:131px;height:15px;background:#fff;"></div>
<div class="t" style="left:48px;top:463px;height:16px;line-height:16px;font-size:12px;color:#777;">密度</div>
<div class="t" style="left:109px;top:463px;height:16px;line-height:16px;font-size:12px;color:#777;"><span style="letter-spacing:-2px">なし</span></div>
<svg class="a" style="left:8px;top:481px" width="10" height="9" viewBox="0 0 10 9"><path d="M1.500 2.500 L5 6 L8.500 2.500" fill="none" stroke="#444" stroke-width="1.400"/></svg>
<div class="t" style="left:28px;top:479.5px;height:16px;line-height:16px;font-size:12px;color:#000;font-weight:bold">表示</div>
<div class="a" style="left:106px;top:494px;width:131px;height:15px;background:#fff;"></div>
<div class="t" style="left:28px;top:495px;height:16px;line-height:16px;font-size:12px;color:#000;width:77px;overflow:hidden"><span style="font-size:11px">Tessellation Qua</span></div>
<div class="t" style="left:109px;top:495px;height:16px;line-height:16px;font-size:12px;color:#000;"><span style="font-size:11px">5</span></div>
<div class="a" style="left:24px;top:510px;width:81px;height:15px;background:#fff;"></div>
<div class="a" style="left:106px;top:510px;width:131px;height:15px;background:#fff;"></div>
<div class="t" style="left:28px;top:511px;height:16px;line-height:16px;font-size:12px;color:#000;"><span style="font-size:1.16em">ｽﾀｲﾙ</span></div>
<div class="t" style="left:109px;top:511px;height:16px;line-height:16px;font-size:12px;color:#000;">色別, <span style="font-size:1.16em">ｽﾀｲﾙ</span>別</div>
<div class="a" style="left:24px;top:526px;width:81px;height:15px;background:#fff;"></div>
<div class="a" style="left:106px;top:526px;width:131px;height:15px;background:#fff;"></div>
<div class="t" style="left:28px;top:527px;height:16px;line-height:16px;font-size:12px;color:#777;">色</div>
<div class="a" style="left:107px;top:527px;width:20px;height:13px;background:#fff;border:1px solid #000"></div>
<div class="a" style="left:3px;top:612px;width:234px;height:22px;background:#f5f5fb;"></div>
<div class="a" style="left:6px;top:612px;width:54px;height:22px;background:#f0f0f2;border-left:1px solid #3c6a97;border-right:1px solid #3c6a97"></div>
<div class="t" style="left:11px;top:614px;height:16px;line-height:16px;font-size:12px;color:#2d5a87;"><span style="font-size:1.16em">ﾌ<span style="margin-right:-0.3em">ﾟ</span>ﾛﾊ<span style="margin-right:-0.3em">ﾟ</span>ﾃｨ</span></div>
<div class="t" style="left:64px;top:614px;height:16px;line-height:16px;font-size:12px;color:#000;"><span style="font-size:1.16em">ﾚｲﾔ</span></div>
<div class="a" style="left:3px;top:634px;width:234px;height:6px;background:#f5f5fb;"></div>
<div class="a" style="left:3px;top:640px;width:234px;height:20px;background:#f5f5fb;"></div>
<div class="t" style="left:8px;top:641px;height:16px;line-height:16px;font-size:12.5px;color:#000;"><span style="font-size:1.16em">ｵﾌ<span style="margin-right:-0.3em">ﾟ</span>ｼｮﾝ</span> - 移動</div>
<svg class="a" style="left:223px;top:644px" width="9" height="12" viewBox="0 0 9 12"><path d="M2.500 1.500h4M3.500 1.500v5M5.500 1.500v5M1.500 6.500h6M4.500 6.500v4" fill="none" stroke="#6a6a78" stroke-width="1"/></svg>
<div class="a" style="left:3px;top:660px;width:234px;height:1px;background:#fff;"></div>
<div class="a" style="left:3px;top:661px;width:234px;height:24px;background:#f5f5fb;"></div>
<svg class="a" style="left:7px;top:665px" width="16" height="16" viewBox="0 0 16 16"><path d="M13.52 7.04 L15.26 7.20 L15.26 8.80 L13.52 8.96 L12.58 11.22 L13.70 12.56 L12.56 13.70 L11.22 12.58 L8.96 13.52 L8.80 15.26 L7.20 15.26 L7.04 13.52 L4.78 12.58 L3.44 13.70 L2.30 12.56 L3.42 11.22 L2.48 8.96 L0.74 8.80 L0.74 7.20 L2.48 7.04 L3.42 4.78 L2.30 3.44 L3.44 2.30 L4.78 3.42 L7.04 2.48 L7.20 0.74 L8.80 0.74 L8.96 2.48 L11.22 3.42 L12.56 2.30 L13.70 3.44 L12.58 4.78z" fill="none" stroke="#2a2a2a" stroke-width="1.300" stroke-linejoin="round"/><circle cx="8" cy="8" r="2.900" fill="none" stroke="#2a2a2a" stroke-width="1.300"/></svg>
<div class="t" style="left:29px;top:665px;height:16px;line-height:16px;font-size:11px;color:#000;">一般</div>
<svg class="a" style="left:11px;top:694px" width="18" height="17" viewBox="0 0 18 17"><path d="M1.500 15.500 L6 9.500 H16.500 L12 15.500z" fill="#f4f4f4" stroke="#999" stroke-width=".9"/><path d="M6.500 14 L9.500 2 L13 10" fill="none" stroke="#888" stroke-width="1.100"/><path d="M8.500 5 L9.500 1 L11 5z" fill="#aaa"/></svg>
<svg class="a" style="left:36px;top:694px" width="17" height="17" viewBox="0 0 17 17"><path d="M2 15 L15 2" stroke="#2e6f96" stroke-width="2.400"/><path d="M9 2 L15.500 1.500 L15 8z" fill="#7fc0e8" stroke="#2e6f96" stroke-width=".8"/><path d="M2 15 L4 9 L8 13z" fill="#7fc0e8" stroke="#2e6f96" stroke-width=".8"/><path d="M2 3 L14 15" stroke="#555" stroke-width="1"/></svg>
<svg class="a" style="left:69px;top:694px" width="18" height="17" viewBox="0 0 18 17"><path d="M2.500 2 V12 L4 15 L5.500 12 V2z M7.500 2 V12 L9 15 L10.500 12 V2z" fill="#666" stroke="#222" stroke-width=".8"/><path d="M10.500 3 H14 C17 3 17 7.500 14 7.500 H10.500" fill="none" stroke="#222" stroke-width="1.400"/></svg>
<svg class="a" style="left:95px;top:694px" width="16" height="17" viewBox="0 0 16 17"><rect x="1.500" y="1.500" width="13" height="2.500" fill="#555" stroke="#222" stroke-width=".8"/><circle cx="8" cy="10" r="5.500" fill="#c6d8f2" stroke="#333" stroke-width="1.200"/><path d="M8 10 L11 6" stroke="#c02a2a" stroke-width="1.200"/></svg>
<svg class="a" style="left:117px;top:694px" width="18" height="17" viewBox="0 0 18 17"><path d="M2.500 5V16M15.500 5V16M3 13.500H15" fill="none" stroke="#888" stroke-width="1"/><path d="M3 13.500l3-1.500v3zM15 13.500l-3-1.500v3z" fill="#888"/><path d="M5 2l3 5M8 2l-3 5M10 2l3 5M13 2l-3 5" stroke="#777" stroke-width=".9"/></svg>
<div class="a" style="left:142px;top:697px;width:15px;height:10px;background:#f8f8e8;border:1px solid #4a4a1a"></div>
<div class="t" style="left:142px;top:697px;width:15px;height:10px;line-height:10px;font-size:7.5px;font-weight:bold;text-align:center;color:#3a3a10;letter-spacing:-.2px">XYZ</div>
<svg class="a" style="left:12px;top:719px" width="12" height="12" viewBox="0 0 12 12"><rect x=".5" y=".5" width="11" height="11" fill="#fff" stroke="#8a8a8a"/></svg>
<div class="t" style="left:31px;top:717px;height:16px;line-height:16px;font-size:10.5px;color:#000;"><span style="font-size:1.16em">ﾊ<span style="margin-right:-0.3em">ﾟ</span>ﾀｰﾝ</span>を作成</div>
<svg class="a" style="left:12px;top:740px" width="12" height="12" viewBox="0 0 12 12"><rect x=".5" y=".5" width="11" height="11" fill="#fff" stroke="#8a8a8a"/></svg>
<div class="t" style="left:31px;top:738px;height:16px;line-height:16px;font-size:10.5px;color:#000;">方向を維持</div>
<svg class="a" style="left:12px;top:760px" width="12" height="12" viewBox="0 0 12 12"><rect x=".5" y=".5" width="11" height="11" fill="#fff" stroke="#8a8a8a"/></svg>
<div class="t" style="left:31px;top:758px;height:16px;line-height:16px;font-size:10.5px;color:#000;">最初に分離</div>
<svg class="a" style="left:12px;top:781px" width="12" height="12" viewBox="0 0 12 12"><rect width="12" height="12" fill="#2d5a87"/><path d="M2.500 6 L5 8.800 L9.800 2.800" fill="none" stroke="#fff" stroke-width="1.500"/></svg>
<div class="t" style="left:31px;top:779px;height:16px;line-height:16px;font-size:10.5px;color:#000;"><span style="font-size:1.16em">ｽｹｯﾁ</span>の接続を保持</div>
<div class="t" style="left:12px;top:801px;height:16px;line-height:16px;font-size:10.5px;color:#666;letter-spacing:-.6px">向きを記憶</div>
<svg class="a" style="left:71px;top:802px" width="13" height="13" viewBox="0 0 13 13"><path d="M2.500 1 V9.500" stroke="#2a8a3a" stroke-width="1.500"/><path d="M2.500 9.500 L9 4.500" stroke="#555" stroke-width="1.200"/><path d="M2.500 9.500 L11 12" stroke="#c02a2a" stroke-width="1.500"/></svg>
<div class="t" style="left:89px;top:801px;height:16px;line-height:16px;font-size:10px;color:#000;"><span style="font-size:1.16em">ﾃ<span style="margin-right:-0.3em">ﾞ</span>ｨﾌｫﾙﾄ</span></div>
<svg class="a" style="left:132px;top:807px" width="7" height="5" viewBox="0 0 7 5"><path d="M0 0h7L3.500 4.500z" fill="#222"/></svg>
<div class="a" style="left:3px;top:960px;width:235px;height:25px;background:#f5f5fb;"></div>
<div class="a" style="left:6px;top:960px;width:84px;height:22px;background:#f0f0f2;border-left:1px solid #3c6a97;border-right:1px solid #3c6a97"></div>
<div class="t" style="left:12px;top:962px;height:16px;line-height:16px;font-size:12px;color:#2d5a87;"><span style="font-size:1.16em">ｵﾌ<span style="margin-right:-0.3em">ﾟ</span>ｼｮﾝ</span> - 移動</div>
<div class="t" style="left:96px;top:962px;height:16px;line-height:16px;font-size:12.5px;color:#000;">選択</div>
<!--LEFT_END-->
<!--VIEW-->
<div class="a" style="left:244px;top:149px;width:988px;height:808px;background:#fff;border:1px solid #a9a697;box-shadow:inset 1px 1px 0 #eeeadb"></div>
<div class="t" style="left:255px;top:157px;height:16px;line-height:16px;font-size:14px;color:#505050;letter-spacing:-.85px"><span style="font-size:1.16em">ﾊﾝﾄ<span style="margin-right:-0.3em">ﾞ</span>ﾙ</span>を<span style="font-size:1.16em">ﾄ<span style="margin-right:-0.3em">ﾞ</span>ﾗｯｸ<span style="margin-right:-0.3em">ﾞ</span></span>して、選択された<span style="font-size:1.16em">ｵﾌ<span style="margin-right:-0.3em">ﾞ</span>ｼ<span style="margin-right:-0.3em">ﾞ</span>ｪｸﾄ</span>を移動します</div>
<div class="a" style="left:1236px;top:147px;width:28px;height:838px;background:#f0f0f0;"></div>
<div class="a" style="left:1236px;top:149px;width:20px;height:25px;background:#f6f6fa;"></div>
<div class="a" style="left:1256px;top:149px;width:5px;height:61px;background:#c8c8c8;"></div>
<div class="t" style="left:1242px;top:155px;writing-mode:vertical-rl;font-size:12px;height:70px;line-height:16px;letter-spacing:0">ｸｲｯｸｶﾞｲﾄﾞ</div>
<svg class="a" style="left:0;top:0" width="1264" height="1017" viewBox="0 0 1264 1017"><polygon points="577.0,525.4 627.2,540.2 615.2,587.1 691.3,609.3 680.0,555.6 730.2,569.2 730.2,825.0 577.0,781.0" fill="#ff7a00" stroke="none" stroke-width="1" stroke-linejoin="round" />
<polygon points="730.2,569.2 759.0,544.4 752.8,601.0 795.8,562.7 789.5,517.9 818.2,493.9 818.2,746.3 730.2,825.0" fill="#f26f00" stroke="none" stroke-width="1" stroke-linejoin="round" />
<polygon points="577.0,321.5 730.2,365.5 730.2,569.2 680.0,555.6 691.3,609.3 615.2,587.1 627.2,540.2 577.0,525.4" fill="#f28532" stroke="none" stroke-width="1" stroke-linejoin="round" />
<polygon points="730.2,365.5 818.2,289.3 818.2,493.9 789.5,517.9 795.8,562.7 752.8,601.0 759.0,544.4 730.2,569.2" fill="#e67a2b" stroke="none" stroke-width="1" stroke-linejoin="round" />
<polygon points="577.0,321.5 665.2,245.0 818.2,289.3 730.2,365.5" fill="#f18532" stroke="none" stroke-width="1" stroke-linejoin="round" />
<polygon points="577.0,525.4 606.5,500.2 627.2,540.2" fill="#f38430" stroke="none" stroke-width="1" stroke-linejoin="round" />
<polygon points="627.2,540.2 615.2,587.1 691.3,609.3 680.0,555.6" fill="#f67f27" stroke="none" stroke-width="1" stroke-linejoin="round" />
<polygon points="635.8,474.5 665.3,448.9 716.4,463.7 730.4,492.4 730.2,569.2 680.0,555.6" fill="#f4832d" stroke="none" stroke-width="1" stroke-linejoin="round" />
<polygon points="759.0,544.4 752.8,601.0 795.8,562.7 789.5,517.9" fill="#eb7a27" stroke="none" stroke-width="1" stroke-linejoin="round" />
<polygon points="767.5,478.6 818.2,493.9 789.5,517.9" fill="#e97b28" stroke="none" stroke-width="1" stroke-linejoin="round" />
<polyline points="577.0,525.4 606.5,500.2 627.2,540.2" fill="none" stroke="rgba(90,50,0,.6)" stroke-width="0.8" stroke-linejoin="round" />
<polyline points="627.2,540.2 643.5,520.0 635.8,474.5 665.3,448.9 716.4,463.7 730.4,492.4" fill="none" stroke="rgba(90,50,0,.6)" stroke-width="0.8" stroke-linejoin="round" />
<polyline points="635.8,474.5 691.3,609.3" fill="none" stroke="rgba(90,50,0,.6)" stroke-width="0.8" stroke-linejoin="round" />
<polyline points="635.8,474.5 680.0,555.6" fill="none" stroke="rgba(90,50,0,.6)" stroke-width="0.8" stroke-linejoin="round" />
<polyline points="818.2,493.9 767.5,478.6 789.5,517.9" fill="none" stroke="rgba(90,50,0,.6)" stroke-width="0.8" stroke-linejoin="round" />
<polyline points="767.5,478.6 779.4,532.4 795.8,562.7" fill="none" stroke="rgba(90,50,0,.6)" stroke-width="0.8" stroke-linejoin="round" />
<polyline points="757.0,525.0 779.4,532.4" fill="none" stroke="rgba(90,50,0,.6)" stroke-width="0.8" stroke-linejoin="round" />
<polyline points="600.9,534.6 599.8,558.3 615.2,587.1" fill="none" stroke="rgba(255,170,90,.5)" stroke-width="0.8" stroke-linejoin="round" />
<polyline points="730.2,569.2 750.0,596.0" fill="none" stroke="rgba(255,150,60,.45)" stroke-width="0.8" stroke-linejoin="round" />
<polyline points="577.0,525.4 627.2,540.2 615.2,587.1 691.3,609.3 680.0,555.6 730.2,569.2 759.0,544.4 752.8,601.0 795.8,562.7 789.5,517.9 818.2,493.9" fill="none" stroke="#45300a" stroke-width="1" stroke-linejoin="round" />
<polyline points="577.0,321.5 665.2,245.0 818.2,289.3 730.2,365.5 577.0,321.5" fill="none" stroke="#45300a" stroke-width="1" stroke-linejoin="round" />
<polyline points="577.0,321.5 577.0,781.0 730.2,825.0 818.2,746.3 818.2,289.3" fill="none" stroke="#45300a" stroke-width="1" stroke-linejoin="round" />
<polyline points="730.2,365.5 730.2,569.2" fill="none" stroke="rgba(80,40,0,.85)" stroke-width="1" stroke-linejoin="round" />
<polyline points="730.2,569.2 730.2,825.0" fill="none" stroke="#bd5600" stroke-width="1.2" stroke-linejoin="round" />
<ellipse cx="695.5" cy="535" rx="59.500" ry="31" fill="none" stroke="rgba(255,222,200,.36)" stroke-width="2.800"/>
<polygon points="753.4,236.6 642.0,334.0 642.0,628.5 753.4,531.0" fill="rgba(110,110,230,.022)" stroke="none" stroke-width="1" stroke-linejoin="round" />
<polygon points="753.4,236.6 724.2,262.1 753.4,270.5" fill="rgba(120,120,235,.09)" stroke="none" stroke-width="1" stroke-linejoin="round" />
<polyline points="642.0,334.0 753.4,236.6 753.4,289.0" fill="none" stroke="rgba(150,150,225,.85)" stroke-width="1.2" stroke-linejoin="round" />
<polyline points="753.4,270.0 753.4,531.0" fill="none" stroke="rgba(120,110,190,.28)" stroke-width="1" stroke-linejoin="round" />
<polyline points="642.0,628.5 753.4,531.0" fill="none" stroke="rgba(120,80,60,.18)" stroke-width="1" stroke-linejoin="round" />
<polyline points="642.0,628.5 654.0,618.0" fill="none" stroke="rgba(90,60,60,.6)" stroke-width="1" stroke-linejoin="round" />
<polyline points="724.2,262.1 642.0,334.0 642.0,628.5" fill="none" stroke="rgba(85,55,90,.55)" stroke-width="1.7" stroke-linejoin="round" />
<polyline points="726.2,262.1 644.0,334.0 644.0,626.8" fill="none" stroke="rgba(255,255,255,0.047)" stroke-width="2" stroke-linejoin="round" />
<polyline points="728.2,262.1 646.0,334.0 646.0,625.0" fill="none" stroke="rgba(255,255,255,0.039)" stroke-width="2" stroke-linejoin="round" />
<polyline points="730.2,262.1 648.0,334.0 648.0,623.2" fill="none" stroke="rgba(255,255,255,0.031)" stroke-width="2" stroke-linejoin="round" />
<polyline points="732.2,262.1 650.0,334.0 650.0,621.5" fill="none" stroke="rgba(255,255,255,0.024)" stroke-width="2" stroke-linejoin="round" />
<polyline points="734.2,262.1 652.0,334.0 652.0,619.8" fill="none" stroke="rgba(255,255,255,0.016)" stroke-width="2" stroke-linejoin="round" />
<polyline points="736.2,262.1 654.0,334.0 654.0,618.0" fill="none" stroke="rgba(255,255,255,0.008)" stroke-width="2" stroke-linejoin="round" />
<g transform="translate(653,344)"><rect x=".5" y=".5" width="19" height="19" rx="4" fill="#f6c8a0" stroke="#c89060" stroke-width=".8"/>
<path d="M3.500 4.500 L8 6.500 V16 L3.500 13.500z" fill="#fdf2e6" stroke="#6a5030" stroke-width=".8"/><path d="M16.500 4.500 L12 6.500 V16 L16.500 13.500z" fill="#58b848" stroke="#2a6a22" stroke-width=".8"/>
<path d="M10 2V18" stroke="#fff" stroke-width="1.600"/><path d="M10 2V18" stroke="#333" stroke-width=".9" stroke-dasharray="3 1.500 1 1.500"/></g>
<defs>
<linearGradient id="gbz" x1="0" x2="1"><stop offset="0" stop-color="#2a2ad0"/><stop offset=".45" stop-color="#5a5af8"/><stop offset="1" stop-color="#2020a8"/></linearGradient>
<linearGradient id="grx" x1="0" y1="0" x2="0" y2="1"><stop offset="0" stop-color="#f06060"/><stop offset="1" stop-color="#b82828"/></linearGradient>
<linearGradient id="ggy" x1="0" y1="0" x2="1" y2="1"><stop offset="0" stop-color="#50e050"/><stop offset="1" stop-color="#189818"/></linearGradient>
<radialGradient id="gys" cx=".4" cy=".35" r=".7"><stop offset="0" stop-color="#fff0a0"/><stop offset=".5" stop-color="#e8c040"/><stop offset="1" stop-color="#a88010"/></radialGradient>
</defs>
<path d="M702.400 477.200 C710 472.500 722 474 728 495" fill="none" stroke="#b42a2a" stroke-width="4.800" stroke-linecap="round"/>
<path d="M720 506.500 C736 508 754 518 759 532 C761.500 540 758 545 754 547" fill="none" stroke="#2a2ae4" stroke-width="4.800" stroke-linecap="round"/>
<path d="M701 500.500 L723.500 503 L720.500 511.500 z" fill="#3030ea"/>
<path d="M700 533 L729 507.500" stroke="url(#ggy)" stroke-width="5.500" stroke-linecap="round"/>
<path d="M748.400 491 L743.500 505 L734.500 496.500z" fill="#2cc42c"/>
<circle cx="737" cy="501" r="3.600" fill="#34c834"/>
<path d="M700 483.500 C722 492 746 514 749.300 546" fill="none" stroke="#34c434" stroke-width="4" stroke-linecap="round"/>
<circle cx="703" cy="485" r="3" fill="#3cd43c"/><circle cx="749" cy="542.500" r="3" fill="#2aa82a"/>
<path d="M703 536.500 L761 553.500" stroke="url(#grx)" stroke-width="5.600" stroke-linecap="round"/>
<path d="M785.600 560.400 L760 559.200 L763.500 548z" fill="#d84444"/>
<rect x="694.400" y="468" width="6.600" height="64" fill="url(#gbz)"/>
<path d="M697.400 446.700 L704.200 470.500 L691.400 470.500z" fill="url(#gbz)"/>
<circle cx="696.700" cy="536.200" r="6.800" fill="url(#gys)"/>
<path d="M755.800 525.300 L755.800 540.500 L759.300 537.300 L761.800 542.800 L764 541.800 L761.600 536.500 L766.300 536.300z" fill="#fff" stroke="#000" stroke-width=".9" stroke-linejoin="round"/>
<path d="M697 764 V738" stroke="#b06a80" stroke-width="1.800"/><path d="M697 723 L699.800 740 L694.200 740z" fill="#4a6ae8"/>
<path d="M697 764.500 L713 751" stroke="#5a7a10" stroke-width="1.800"/><path d="M722 743.500 L714.500 754.200 L709.800 748.500z" fill="#1a8a1a"/>
<path d="M697 765 L723 772" stroke="#ff2a10" stroke-width="1.800"/><path d="M738.500 775.800 L721.500 775.500 L723.200 768.800z" fill="#ff1a10"/>
<circle cx="697" cy="764.500" r="2.300" fill="#b8a090" stroke="#888" stroke-width=".5"/>
<text x="697.400" y="716.500" font-size="10.500" font-weight="bold" fill="#7a3a9a" text-anchor="middle" font-family="Liberation Sans, sans-serif">Z</text>
<text x="727.800" y="742" font-size="10.500" font-weight="bold" fill="#9a8a10" text-anchor="middle" font-family="Liberation Sans, sans-serif">Y</text>
<text x="749.800" y="783.500" font-size="10.500" font-weight="bold" fill="#ff3010" text-anchor="middle" font-family="Liberation Sans, sans-serif">X</text>
<g>
<path d="M303.400 883 V875" stroke="#1010e0" stroke-width="1.600"/><path d="M303.400 866.800 L306.400 877.400 L300.500 877.400z" fill="#1010e0"/>
<path d="M289.400 891.700 L301.200 884.200 L316.700 888.100 L316.300 905.100 L306.800 914.200 L289.800 907.900z" fill="#e8f0fa" stroke="#b4c4d8" stroke-width=".8" stroke-linejoin="round"/>
<path d="M307.200 895.600 L316.700 888.100 L316.300 905.100 L306.800 914.200z" fill="#c8d6ea"/>
<path d="M289.400 891.700 L301.200 884.200 L316.700 888.100 L307.200 895.600z" fill="#dce8f6"/>
<path d="M289.400 891.700 L307.200 895.600 L316.700 888.100 M307.200 895.600 L306.800 914.200" fill="none" stroke="#b4c4d8" stroke-width=".8"/>
<ellipse cx="303.400" cy="888.800" rx="3.800" ry="2.600" fill="#1010e0"/>
<ellipse cx="298" cy="903.300" rx="4" ry="3.900" fill="#109a28"/>
<ellipse cx="313" cy="900.500" rx="2.600" ry="3.700" fill="#f01010"/>
<path d="M319 902.500 L327 905" stroke="#f01010" stroke-width="1.600"/><path d="M334.500 907.300 L325.200 907.500 L326.500 901.800z" fill="#f01010"/>
<text x="303.400" y="862" font-size="10.500" font-weight="bold" fill="#2020e0" text-anchor="middle" font-family="Liberation Sans, sans-serif">Z</text>
<text x="318.200" y="889" font-size="10.500" font-weight="bold" fill="#1a7a1a" text-anchor="middle" font-family="Liberation Sans, sans-serif">Y</text>
<text x="342.800" y="913.500" font-size="10.500" font-weight="bold" fill="#f01818" text-anchor="middle" font-family="Liberation Sans, sans-serif">X</text>
</g>
<path d="M1157 929.500 H1214" stroke="#3030c8" stroke-width="1.400"/>
<text x="1185" y="942" font-size="10.500" fill="#3030c8" text-anchor="middle" font-family="Liberation Sans, sans-serif">20mm</text></svg>
<div class="a" style="left:260px;top:183px;width:48px;height:48px;border:1px solid #444;border-radius:8px;background:#fff;opacity:1"><svg width="46" height="46" viewBox="0 0 46 46" style="position:absolute;left:0;top:0"><defs><linearGradient id="gcur" x1="0" y1="0" x2="1" y2="1"><stop offset="0" stop-color="#d8b070"/><stop offset=".45" stop-color="#8a6228"/><stop offset="1" stop-color="#5a3a10"/></linearGradient></defs>
<path d="M13.500 6.500 L13.500 33 L19.500 27.500 L25 40 L30.500 37.500 L25 25.500 L34 25z" fill="none" stroke="#f0a850" stroke-width="3.200" stroke-linejoin="round" opacity=".8"/><path d="M13.500 6.500 L13.500 33 L19.500 27.500 L25 40 L30.500 37.500 L25 25.500 L34 25z" fill="url(#gcur)" stroke="#4a2c08" stroke-width="1" stroke-linejoin="round"/></svg></div>
<div class="a" style="left:261px;top:237px;width:32px;height:32px;border:1px solid #555;border-radius:6px;background:#fff;opacity:1"><svg width="30" height="30" viewBox="0 0 30 30" style="position:absolute;left:0;top:0"><path d="M4.400 4 L4.400 16 L7.200 13.800 L9.600 19 L12 18 L9.700 13 L13.300 12.800z" fill="#909090" stroke="#555" stroke-width=".7"/>
<path d="M14.500 16.500 L20 14.500 L24 16.500 V24.500 L18.500 27 L14.500 24.500z" fill="#e8c09a" stroke="#b07a50" stroke-width=".7"/><path d="M14.500 16.500 L18.500 18.500 L24 16.500 M18.500 18.500V27" fill="none" stroke="#b07a50" stroke-width=".7"/>
<path d="M12 14.500 L20.500 12 L26 14.500 V26 L18 29 L12 26z M12 14.500 L18 17 L26 14.500 M18 17 V29" fill="none" stroke="#e03030" stroke-width=".7"/></svg></div>
<div class="a" style="left:324px;top:181px;width:32px;height:32px;border:1px solid #555;border-radius:6px;background:#fff;opacity:1"><svg width="30" height="30" viewBox="0 0 30 30" style="position:absolute;left:0;top:0"><path d="M3.200 25.200 L4.600 26.600 L17.800 14.200 L19.800 16.900 L26.800 3.100 L13.400 10.500 L16.300 12.700z" fill="#c4e6f6" stroke="#3a6f96" stroke-width=".8" stroke-linejoin="round"/></svg></div>
<div class="a" style="left:387px;top:181px;width:32px;height:32px;border:1px solid #555;border-radius:6px;background:#fff;opacity:1"><svg width="30" height="30" viewBox="0 0 30 30" style="position:absolute;left:0;top:0"><path d="M2.200 26.600 C4 20 9 22.500 13 21 C16.500 19.800 18.500 17.500 20.800 15.500 L23.700 17.200 L27.700 4.400 L17.600 13.200 L19.500 14.300 C17.500 16.500 15.500 18 12.500 18.800 C8 20 3.500 18.500 1.800 24.500z" fill="#c4e6f6" stroke="#3a6f96" stroke-width=".8" stroke-linejoin="round"/></svg></div>
<div class="a" style="left:450px;top:181px;width:32px;height:32px;border:1px solid #555;border-radius:6px;background:#fff;opacity:1"><svg width="30" height="30" viewBox="0 0 30 30" style="position:absolute;left:0;top:0"><path d="M11.300 14.400 L18.400 16.700 L23.200 23.900 L16.500 27.700 L6.100 23.400z" fill="#9ae0d8" stroke="#2e8a86" stroke-width=".7"/><path d="M11.300 14.400 L16.500 27.700" stroke="#2e8a86" stroke-width=".6"/><path d="M11.300 14.400 L16.500 27.700 L6.100 23.400z" fill="#b8ece6"/>
<path d="M1.800 6.800 L8.900 3 L27.500 9.600 L21.300 12.500z" fill="#e0b080" stroke="#8a5a2e" stroke-width=".7"/><path d="M1.800 6.800 L21.300 12.500 L21.800 16.500 L2.800 11z" fill="#f0cca4" stroke="#8a5a2e" stroke-width=".7"/><path d="M21.300 12.500 L27.500 9.600 L27 13.400 L21.800 16.500z" fill="#c08850" stroke="#8a5a2e" stroke-width=".7"/></svg></div>
<div class="a" style="left:513px;top:181px;width:32px;height:32px;border:1px solid #555;border-radius:6px;background:#fff;opacity:1"><svg width="30" height="30" viewBox="0 0 30 30" style="position:absolute;left:0;top:0"><path d="M15.300 14.500 L20.500 11 L27.100 13.500 V24 L21.500 26.700 L15.300 24.500z" fill="#d8a070" stroke="#8a5a2e" stroke-width=".7"/><path d="M15.300 14.500 L21.500 16.500 L27.100 13.500 M21.500 16.500V26.700" fill="none" stroke="#8a5a2e" stroke-width=".7"/><path d="M15.800 15.300 L21 17 V26 L15.800 24z" fill="#f0d0b0"/>
<path d="M3.400 3 L4.800 2 L11.500 8.500 L13.500 6.500 L20 20.500 L6.500 12.500 L9 10.500z" fill="#bfe4f6" stroke="#1e5f96" stroke-width=".8" stroke-linejoin="round"/><rect x="16.500" y="18" width="4.500" height="4.500" fill="#8acaf0" opacity=".8"/></svg></div>
<div class="a" style="left:324px;top:221px;width:32px;height:32px;border:1px solid #555;border-radius:6px;background:#fff;opacity:1"><svg width="30" height="30" viewBox="0 0 30 30" style="position:absolute;left:0;top:0"><path d="M7.500 18 L11 9.500" stroke="#3a8a4a" stroke-width="1"/><path d="M13.400 1.700 L14.300 10.800 L8.600 10z" fill="#b6ecc0" stroke="#3a8a4a" stroke-width=".7"/>
<path d="M10 22 L17 24.500" stroke="#b03a3a" stroke-width="1"/><path d="M26.200 28 L14.700 26.400 L16.800 22.200z" fill="#f2b0b0" stroke="#b03a3a" stroke-width=".7"/>
<circle cx="6.700" cy="20.900" r="4.200" fill="#e8e840" stroke="#a8a820" stroke-width=".8"/></svg></div>
<div class="a" style="left:387px;top:221px;width:32px;height:32px;border:1px solid #555;border-radius:6px;background:#fff;opacity:1"><svg width="30" height="30" viewBox="0 0 30 30" style="position:absolute;left:0;top:0"><path d="M14.500 3.400 L17.600 10.800 H15.700 V16.200 H13.300 V10.800 H11.600z" fill="#c4e6f6" stroke="#3a6f96" stroke-width=".8" stroke-linejoin="round"/><path d="M2.200 25 L5.500 18.800 L7 20.600 L12.300 17.600 L13.500 19.600 L8.200 22.600 L9.500 24.500z" fill="#c4e6f6" stroke="#3a6f96" stroke-width=".8" stroke-linejoin="round"/><path d="M27 24.500 L19.800 24.300 L21 22.400 L15.700 19.600 L16.900 17.600 L22.200 20.400 L23.600 18.600z" fill="#c4e6f6" stroke="#3a6f96" stroke-width=".8" stroke-linejoin="round"/></svg></div>
<div class="a" style="left:513px;top:221px;width:32px;height:32px;border:1px solid #888;border-radius:6px;background:#fff;opacity:0.35"><svg width="30" height="30" viewBox="0 0 30 30" style="position:absolute;left:0;top:0"><path d="M14 4 L25 6 L24 17 L12 15z" fill="#e8c8b0" stroke="#a08060" stroke-width=".8"/><path d="M19 9 L20 24 L17 24 L21 30 L24 23.500 L22 24 L21 9z" fill="#a8d8f0" stroke="#5a8ab0" stroke-width=".7"/><path d="M5 27 L18 23 L16 28z" fill="#c8e4f4" stroke="#8ab0c8" stroke-width=".6"/></svg></div>
<!--VIEW_END-->
<!--BOTTOM-->
<div class="a" style="left:241px;top:960px;width:995px;height:25px;background:#f8f8fc;border-top:1px solid #3a3a3a;border-left:1px solid #3a3a3a"></div>
<div class="a" style="left:245px;top:960px;width:69px;height:22px;background:#f4f4fa;border:1px solid #2d5a87;border-top:none"></div>
<svg class="a" style="left:249px;top:963px" width="15" height="16" viewBox="0 0 15 16"><path d="M1.500 .5 H9 L12.500 4 V14.500 H1.500z" fill="#fff" stroke="#6f7f9c"/><path d="M9 .5V4h3.500" fill="none" stroke="#6f7f9c"/>
<path d="M3 10 L8 8 L13.500 10 L8.500 12.500z" fill="#f6dcc0" stroke="#6b3a12" stroke-width=".8"/><path d="M3 10v2l5.500 3 5-3v-2l-5 2.500z" fill="#f0c080" stroke="#6b3a12" stroke-width=".8"/></svg>
<div class="t" style="left:267px;top:964px;height:16px;line-height:16px;font-size:12.5px;color:#2d5a87;font-weight:bold">test1</div>
<svg class="a" style="left:300px;top:967px" width="8" height="8" viewBox="0 0 8 8"><path d="M1 1 L7 7 M7 1 L1 7" stroke="#555" stroke-width="1.400"/></svg>
<svg class="a" style="left:1194px;top:965px" width="40" height="12" viewBox="0 0 40 12"><path d="M6.500 2 L2.500 6 L6.500 10z" fill="#fff" stroke="#333" stroke-width=".9"/><path d="M16.500 2 L20.500 6 L16.500 10z" fill="#fff" stroke="#333" stroke-width=".9"/><path d="M29.500 2.500 L36.500 9.500 M36.500 2.500 L29.500 9.500" stroke="#222" stroke-width="1.400"/></svg>
<div class="t" style="left:8px;top:993px;height:16px;line-height:16px;font-size:11px;color:#fff;letter-spacing:-1.1px">ﾊﾝﾄﾞﾙをﾄﾞﾗｯｸﾞして、選択されたｵﾌﾞｼﾞｪｸﾄを移動します</div>
<div class="a" style="left:522px;top:991px;width:1px;height:21px;background:#6f8fb0;"></div>
<div class="a" style="left:675px;top:991px;width:1px;height:21px;background:#6f8fb0;"></div>
<div class="a" style="left:739px;top:991px;width:1px;height:21px;background:#6f8fb0;"></div>
<div class="a" style="left:840px;top:991px;width:1px;height:21px;background:#6f8fb0;"></div>
<svg class="a" style="left:700px;top:990px" width="320" height="24" viewBox="0 0 320 24">
<path d="M8 16 L15 6 L22 16z" fill="#aab4c0"/><path d="M27 13.500 h6 l-3-3.500z" fill="#fff"/>
<path d="M293 8 h8 l-4-5z M293 12 h8 l-4 5z" fill="#6a86a4"/>
<path d="M310 4 V16 L313 13.500 L315 18 L317 17 L315 12.800 L319 12.500z" fill="#fff" stroke="#222" stroke-width=".8"/>
</svg>
<svg class="a" style="left:1010px;top:988px" width="254" height="28" viewBox="0 0 254 28">
<path d="M9 6.500 C13 4 16 8 13.500 12 " fill="none" stroke="#8ec8f4" stroke-width="1.800"/><path d="M6.500 4.500 L12 5 L8.500 9.500z" fill="#8ec8f4"/>
<path d="M28 7 V19 L31 16.500 L33 21 L35 20 L33 15.800 L37 15.500z" fill="#fff" stroke="#222" stroke-width=".8"/>
<path d="M44 15.500 h6 l-3-3.500z" fill="#fff"/>
<rect x="60" y="8" width="14" height="11" fill="none" stroke="#8ec8f4" stroke-width="1.600" stroke-dasharray="3.500 2"/>
<path d="M79 15.500 h6 l-3-3.500z" fill="#fff"/>
<rect x="90" y="5" width="1" height="21" fill="#6f8fb0"/>
<g transform="translate(94 5) scale(1.050)" fill="none" stroke="#8ec8f4" stroke-width="2" stroke-linecap="round"><path d="M8.500 3 C5 4.500 5 8 7 10"/><path d="M14 7.500 C12.500 4.500 9.500 4.500 7 6.500" /><path d="M9.500 14 C13 13 13.500 9.500 11.500 7.500"/><path d="M3.500 9.500 C5 12.500 8 12.500 10.500 10.500"/><path d="M7 0.500 L11 3 L7.500 5.500z M16.500 6 L14.500 10.500 L11.500 7z M11 16.500 L6.500 14.500 L10 11.500z M1 11 L3 6.500 L6 10z" fill="#8ec8f4" stroke="none"/></g>
<path d="M114 15.500 h6 l-3-3.500z" fill="#fff"/>
<path d="M137 5 L140 8.500 H138 V12 H141.500 V10 L145 13 L141.500 16 V14 H138 V17.500 H140 L137 21 L134 17.500 H136 V14 H132.500 V16 L129 13 L132.500 10 V12 H136 V8.500 H134z" fill="#8ec8f4"/>
<circle cx="159" cy="11.500" r="5.500" fill="#fff" stroke="#8ec8f4" stroke-width="1.800"/><path d="M163 16 L168 21" stroke="#8ec8f4" stroke-width="3" stroke-linecap="round"/>
<path d="M171 15.500 h6 l-3-3.500z" fill="#fff"/>
<path d="M185 19 L189 11 L191 13.500 L203 7.500 L204.500 10.500 L193 16.500 L195 19z" fill="#8ec8f4"/>
<path d="M232 8 L228 16 L226 13.500 L214 19.500 L212.500 16.500 L224 10.500 L222 8z" fill="#7a8ea4"/>
</svg>
<div class="t" style="left:895px;top:994px;height:16px;line-height:16px;font-size:11px;color:#fff;">2<span style="font-size:1.16em">ﾎ<span style="margin-right:-0.3em">ﾞ</span>ﾃ<span style="margin-right:-0.3em">ﾞ</span>ｨ</span></div>
<!--BOTTOM_END-->
</div>
</body>
</html>
